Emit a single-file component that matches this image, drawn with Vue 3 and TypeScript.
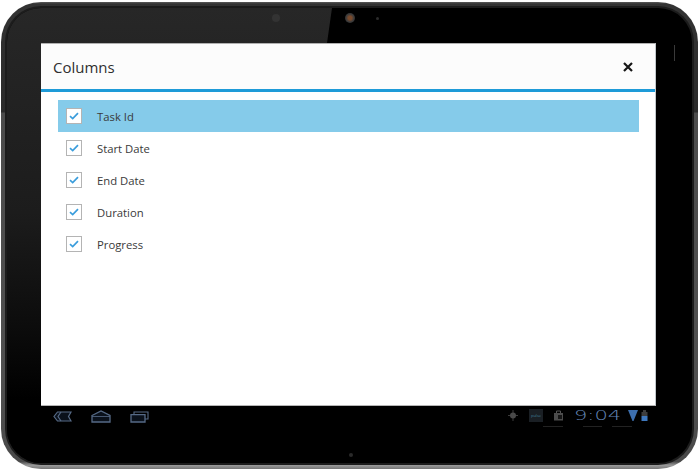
<script setup lang="ts">
const columns: string[] = ['Task Id', 'Start Date', 'End Date', 'Duration', 'Progress']
</script>

<template>
  <div class="page">
    <div class="tablet">
      <div class="bezel">
        <div class="glare"></div>
        <main class="dialog">
          <header class="head">
            <span class="title">Columns</span>
            <svg class="close" width="12" height="12" viewBox="0 0 12 12" aria-label="Close">
              <path d="M2 2 L10 10 M10 2 L2 10" stroke="#161616" stroke-width="2.2" fill="none" />
            </svg>
          </header>
          <ul class="list">
            <li v-for="(c, i) in columns" :key="c" class="row" :class="{ active: i === 0 }">
              <span class="box">
                <svg width="10" height="8" viewBox="0 0 10 8">
                  <path d="M1 4.2 L3.7 6.6 L9 1.2" stroke="#3a9ddc" stroke-width="1.7" fill="none" />
                </svg>
              </span>
              <span class="label">{{ c }}</span>
            </li>
          </ul>
        </main>
        <footer class="nav">
          <div class="nav-left">
            <svg width="19" height="11" viewBox="0 0 19 11">
              <path d="M4.5 1 H18 L15.5 5.5 L18 10 H4.5 L1 5.5 Z" fill="#0a111b" stroke="#566a86" stroke-width="1.2" />
              <path d="M8 1 L5 5.5 L8 10" fill="none" stroke="#566a86" stroke-width="1.2" />
            </svg>
            <svg width="20" height="13" viewBox="0 0 20 13">
              <path d="M1 5.5 L10 1 L19 5.5 V12 H1 Z" fill="#0a111b" stroke="#566a86" stroke-width="1.3" />
              <path d="M1 6.5 H19" stroke="#566a86" stroke-width="0.8" />
            </svg>
            <svg width="19" height="12" viewBox="0 0 19 12">
              <path d="M4 3 V1 H18 V8 H15" fill="none" stroke="#566a86" stroke-width="1.1" />
              <path d="M1 3.6 H15 V11 H1 Z" fill="#0a111b" stroke="#566a86" stroke-width="1.3" />
            </svg>
          </div>
          <div class="nav-right">
            <svg class="bug" width="10" height="11" viewBox="0 0 10 11">
              <path d="M5 0 V11 M0 5.5 H10" stroke="#3c3c3c" stroke-width="1" />
              <circle cx="5" cy="5.5" r="3" fill="#4a4a4a" />
            </svg>
            <span class="pulse">pulse</span>
            <svg class="bag" width="11" height="11" viewBox="0 0 11 11">
              <path d="M1 3 H10 V10.5 H1 Z" fill="#4c4c4c" />
              <path d="M3.5 3 V1 H7.5 V3" fill="none" stroke="#555" />
              <rect x="5" y="5" width="4" height="4" fill="#161616" />
            </svg>
            <span class="clock"><span class="digits">9:04</span></span>
            <svg class="wifi" width="10" height="11" viewBox="0 0 10 11">
              <path d="M0 0 H10 L5.5 11 H4.5 Z" fill="#3d6fae" />
            </svg>
            <svg class="battery" width="7" height="11" viewBox="0 0 7 11">
              <path d="M2 0 H5 V2 H6.5 V6 H0.5 V2 H2 Z" fill="#3d3d3d" />
              <rect x="0.5" y="6" width="6" height="5" fill="#3f78bd" />
            </svg>
          </div>
          <span class="tick tick-a"></span>
          <span class="tick tick-b"></span>
          <span class="tick tick-c"></span>
        </footer>
      </div>
      <span class="cam-dim"></span>
      <span class="cam"></span>
      <span class="sensor"></span>
      <span class="side-mark"></span>
      <span class="bottom-dot"></span>
    </div>
  </div>
</template>

<style scoped>
.page {
  width: 699px;
  height: 469px;
  background: #fff;
  overflow: hidden;
  font-family: "Open Sans", "Noto Sans", sans-serif;
}
.tablet {
  position: relative;
  box-sizing: border-box;
  width: 697px;
  height: 467px;
  margin: 2px 0 0 1px;
  padding: 6px;
  border-radius: 40px;
  background: linear-gradient(180deg, #5a5a5a 0, #333 2px, #2a2a2a 110px, #4c4c4c 111px, #505050 380px, #4a4a4a 98.4%, #9a9a9a 99.2%, #777 100%);
}
.bezel {
  position: relative;
  box-sizing: border-box;
  height: 100%;
  padding: 35px 35px 0 34px;
  border-radius: 34px;
  background: #000;
  box-shadow: 0 0 0 2px #1c1c1c;
  display: flex;
  flex-direction: column;
}
.glare {
  position: absolute;
  inset: 0;
  border-radius: 34px;
  background: linear-gradient(180deg, #272727 0, #1c1c1c 45%, #0c0c0c 70%, #000 86%);
  clip-path: polygon(0 0, 325px 0, 260px 100%, 0 100%);
}
.cam-dim, .cam, .sensor, .bottom-dot, .side-mark { position: absolute; }
.cam-dim { left: 271px; top: 12px; width: 8px; height: 8px; border-radius: 50%; background: #333; }
.cam {
  left: 344px; top: 11px; width: 10px; height: 10px; border-radius: 50%;
  background: radial-gradient(circle, #7a4a2c 0 25%, #3c3c3c 55%, #222 100%);
}
.sensor { left: 375px; top: 15px; width: 3px; height: 3px; border-radius: 50%; background: #2c2c2c; }
.side-mark { left: 673px; top: 43px; width: 1px; height: 16px; background: #3a3a3a; }
.bottom-dot { left: 348px; top: 451px; width: 4px; height: 4px; border-radius: 50%; background: #2a2a2a; }
.dialog {
  position: relative;
  width: 615px;
  height: 363px;
  flex: none;
  background: #fff;
  border-top: 1px solid #b0b0b0;
  border-bottom: 1px solid #b5b5b5;
  border-right: 1px solid #c2c8cc;
  box-sizing: border-box;
}
.head {
  height: 48px;
  box-sizing: border-box;
  background: #fcfcfc;
  border-bottom: 3px solid #1e9bd8;
  display: flex;
  align-items: center;
  justify-content: space-between;
  padding: 0 21px 0 12px;
}
.title { font-size: 15px; color: #2f2f2f; }
.list { list-style: none; margin: 8px 16px 0 17px; padding: 0; }
.row {
  height: 32px;
  display: flex;
  align-items: center;
  padding-left: 8px;
}
.row.active { background: #85cbea; }
.box {
  box-sizing: border-box;
  width: 16px;
  height: 16px;
  border: 1px solid #b4b4b4;
  background: #fff;
  display: flex;
  align-items: center;
  justify-content: center;
}
.label { margin-left: 15px; font-size: 11.3px; color: #3a3a3a; }
.nav {
  position: relative;
  flex: 1;
  display: flex;
  justify-content: space-between;
  align-items: flex-start;
  padding: 4px 9px 0 12px;
}
.nav-left { display: flex; gap: 19px; align-items: center; }
.nav-right { display: flex; align-items: center; height: 11px; }
.bug { margin-right: 11px; }
.pulse {
  width: 14px; height: 13px; background: #1a1f24; color: #3f7f9c;
  font-size: 4px; line-height: 13px; text-align: center; margin-right: 10px;
}
.bag { margin-right: 10px; }
.clock {
  display: block;
  width: 48px;
  height: 11px;
  margin-right: 6px;
  color: #6285b5;
  font-family: "DejaVu Sans", sans-serif;
  font-size: 14px;
  font-weight: 200;
  line-height: 11px;
  white-space: nowrap;
}
.digits { display: inline-block; transform: scaleX(1.5); transform-origin: left center; }
.wifi { margin-right: 3px; }
.tick { position: absolute; top: 20px; height: 1px; background: #222; }
.tick-a { left: 502px; width: 20px; }
.tick-b { left: 542px; width: 19px; }
.tick-c { left: 571px; width: 20px; }
</style>
